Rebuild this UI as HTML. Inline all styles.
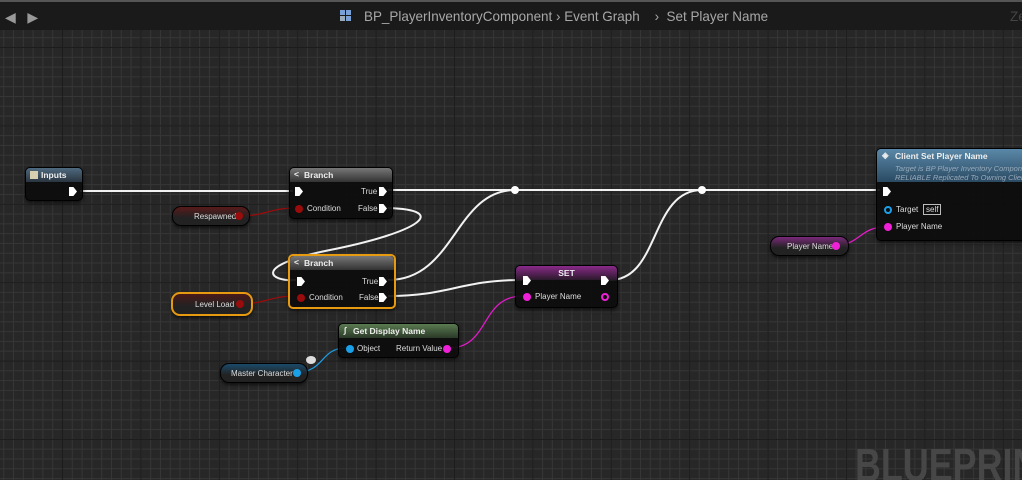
<!DOCTYPE html>
<html><head><meta charset="utf-8"><style>
*{margin:0;padding:0;box-sizing:border-box}
html,body{width:1022px;height:480px;overflow:hidden}
body{background:#272727;font-family:"Liberation Sans",sans-serif;position:relative}
#w{position:absolute;left:0;top:0;width:1022px;height:480px;overflow:hidden}
.grid{position:absolute;inset:0;
background-image:
linear-gradient(to right,#1c1c1c 0 1px,transparent 1px),
linear-gradient(to bottom,#1c1c1c 0 1px,transparent 1px),
linear-gradient(to right,#363636 0 1px,transparent 1px),
linear-gradient(to bottom,#363636 0 1px,transparent 1px);
background-size:78.4px 78.4px,78.4px 78.4px,9.8px 9.8px,9.8px 9.8px;
background-position:62px 47px,62px 47px,62px 47px,62px 47px}
.top{position:absolute;left:0;top:0;width:1022px;height:30px;background:#1a1a1a;border-top:2px solid #555}
.top .t{position:absolute;top:6px;font-size:14px;color:#a8a8a8;white-space:nowrap;transform:scaleX(.96);transform-origin:left}
.node{position:absolute;background:rgba(12,12,12,.92);border-radius:5px;box-shadow:0 2px 4px rgba(0,0,0,.6);border:1px solid #000}
.hd{height:14px;border-radius:4px 4px 0 0;font-size:8.5px;color:#eee;font-weight:bold;padding:2px 0 0 14px;position:relative;white-space:nowrap;overflow:hidden}
.lbl{position:absolute;font-size:8px;color:#ddd;white-space:nowrap}
.var{position:absolute;border-radius:9px;height:20px;border:1px solid #000;font-size:8px;color:#ddd;box-shadow:0 2px 3px rgba(0,0,0,.6);white-space:nowrap}
.exec{position:absolute;width:8px;height:9px;background:#fff;clip-path:polygon(0 0,55% 0,100% 50%,55% 100%,0 100%)}
.pin{position:absolute;width:8px;height:8px;border-radius:50%}
</style></head><body><div id="w">
<div class="grid"></div>
<svg style="position:absolute;left:0;top:0" width="1022" height="480">
<g fill="none" stroke="#f2f2f2" stroke-width="2">
<path d="M80,191 L293,191"/>
<path d="M388,190 L880,190"/>
<path d="M388,208 C450,210 420,232 330,250 C250,266 270,282 296,280"/>
<path d="M388,280 C455,280 455,190 515,190"/>
<path d="M388,296 C450,296 460,280 522,280"/>
<path d="M610,280 C660,280 650,190 702,190"/>
</g>
<g fill="none" stroke-width="1.3">
<path d="M240,216 C265,216 270,208 295,208" stroke="#9a0b0b"/>
<path d="M240,304 C265,304 270,296 295,296" stroke="#9a0b0b"/>
<path d="M449,348 C490,348 480,296 523,296" stroke="#e01cc8"/>
<path d="M836,245 C860,245 860,227 885,227" stroke="#e01cc8"/>
<path d="M297,372 C325,372 320,348 346,348" stroke="#1a9be0"/>
</g>
<circle cx="515" cy="190" r="4" fill="#fff"/>
<circle cx="702" cy="190" r="4" fill="#fff"/>
<ellipse cx="311" cy="360" rx="5" ry="4" fill="#ddd"/>
</svg>
<div class="top">
<div style="position:absolute;left:5px;top:7px;color:#999;font-size:14px">&#9664;&nbsp;&nbsp;&nbsp;&#9654;</div>
<div style="position:absolute;left:340px;top:8px;width:5px;height:5px;background:#7aa0d8;box-shadow:6px 0 #7aa0d8,0 6px #9ab,6px 6px #7aa0d8"></div>
<div class="t" style="left:364px">BP_PlayerInventoryComponent › Event Graph&nbsp;&nbsp;&nbsp;&nbsp;›&nbsp;&nbsp;Set Player Name</div>
<div class="t" style="left:1010px;color:#444">Ze</div>
</div>
<div style="position:absolute;left:855px;top:438px;font-size:46px;font-weight:bold;color:#474747;white-space:nowrap;transform:scaleX(.78);transform-origin:left">BLUEPRINT</div>

<div class="node" style="left:25px;top:167px;width:58px;height:34px">
<div class="hd" style="background:linear-gradient(#4f6a80,#2a3540);padding-left:15px">Inputs<span style="position:absolute;left:4px;top:3px;width:8px;height:8px;background:#d8cfb0"></span></div>
<div class="exec" style="left:43px;top:19px"></div></div>

<div class="node" style="left:289px;top:167px;width:104px;height:52px">
<div class="hd" style="background:linear-gradient(#777,#333)">Branch<span style="position:absolute;left:4px;top:1px">&lt;</span></div>
<div class="exec" style="left:5px;top:19px"></div>
<div class="lbl" style="left:71px;top:19px">True</div><div class="exec" style="left:89px;top:19px"></div>
<div class="pin" style="left:5px;top:37px;background:#9a0b0b"></div><div class="lbl" style="left:17px;top:36px">Condition</div>
<div class="lbl" style="left:68px;top:36px">False</div><div class="exec" style="left:89px;top:36px"></div></div>

<div class="var" style="left:172px;top:206px;width:78px;background:linear-gradient(#5a1a1a,#222 60%)"><span style="position:absolute;left:21px;top:5px">Respawned</span><div class="pin" style="left:62px;top:5px;background:#9a0b0b"></div></div>

<div class="node" style="left:288px;top:254px;width:108px;height:55px;border:2px solid #e69a10">
<div class="hd" style="background:linear-gradient(#777,#333)">Branch<span style="position:absolute;left:4px;top:1px">&lt;</span></div>
<div class="exec" style="left:7px;top:21px"></div>
<div class="lbl" style="left:72px;top:21px">True</div><div class="exec" style="left:89px;top:21px"></div>
<div class="pin" style="left:7px;top:38px;background:#9a0b0b"></div><div class="lbl" style="left:19px;top:37px">Condition</div>
<div class="lbl" style="left:69px;top:37px">False</div><div class="exec" style="left:89px;top:37px"></div></div>

<div class="var" style="left:171px;top:292px;width:82px;height:24px;border:2px solid #e69a10;background:linear-gradient(#4a1a1a,#222 60%)"><span style="position:absolute;left:22px;top:6px">Level Load</span><div class="pin" style="left:63px;top:6px;background:#9a0b0b"></div></div>

<div class="node" style="left:515px;top:265px;width:103px;height:43px">
<div class="hd" style="background:linear-gradient(#8a2a8a,#2a1a2a);text-align:center;padding-left:0">SET</div>
<div class="exec" style="left:7px;top:10px"></div><div class="exec" style="left:85px;top:10px"></div>
<div class="pin" style="left:7px;top:27px;background:#f020d8"></div><div class="lbl" style="left:19px;top:26px">Player Name</div>
<div class="pin" style="left:85px;top:27px;border:2px solid #f020d8"></div></div>

<div class="node" style="left:338px;top:323px;width:121px;height:35px">
<div class="hd" style="background:linear-gradient(#5a7a50,#2a3a28)">Get Display Name<span style="position:absolute;left:5px;top:1px;font-style:italic">∫</span></div>
<div class="pin" style="left:7px;top:21px;background:#1aa0e8"></div><div class="lbl" style="left:18px;top:20px">Object</div>
<div class="lbl" style="left:57px;top:20px">Return Value</div><div class="pin" style="left:104px;top:21px;background:#f020d8"></div></div>

<div class="var" style="left:220px;top:363px;width:88px;background:linear-gradient(#1a4a6a,#222 60%)"><span style="position:absolute;left:10px;top:5px">Master Character</span><div class="pin" style="left:72px;top:5px;background:#1aa0e8"></div></div>

<div class="node" style="left:876px;top:148px;width:150px;height:93px">
<div class="hd" style="height:33px;background:linear-gradient(#5a88a8,#2a4a62);padding-left:18px">Client Set Player Name<span style="position:absolute;left:5px;top:1px">◈</span>
<div style="font-weight:normal;font-style:italic;color:#9ab;font-size:7.5px;margin-top:3px;line-height:9px;white-space:nowrap">Target is BP Player Inventory Compon<br>RELIABLE Replicated To Owning Clien</div></div>
<div class="exec" style="left:6px;top:38px"></div>
<div class="pin" style="left:7px;top:57px;border:2px solid #1aa0e8"></div><div class="lbl" style="left:19px;top:56px">Target</div>
<div class="lbl" style="left:46px;top:55px;border:1px solid #bbb;padding:0 2px">self</div>
<div class="pin" style="left:7px;top:74px;background:#f020d8"></div><div class="lbl" style="left:19px;top:73px">Player Name</div></div>

<div class="var" style="left:770px;top:236px;width:79px;background:linear-gradient(#7a2a7a,#222 60%)"><span style="position:absolute;left:16px;top:5px">Player Name</span><div class="pin" style="left:61px;top:5px;background:#f020d8"></div></div>
</div></body></html>
